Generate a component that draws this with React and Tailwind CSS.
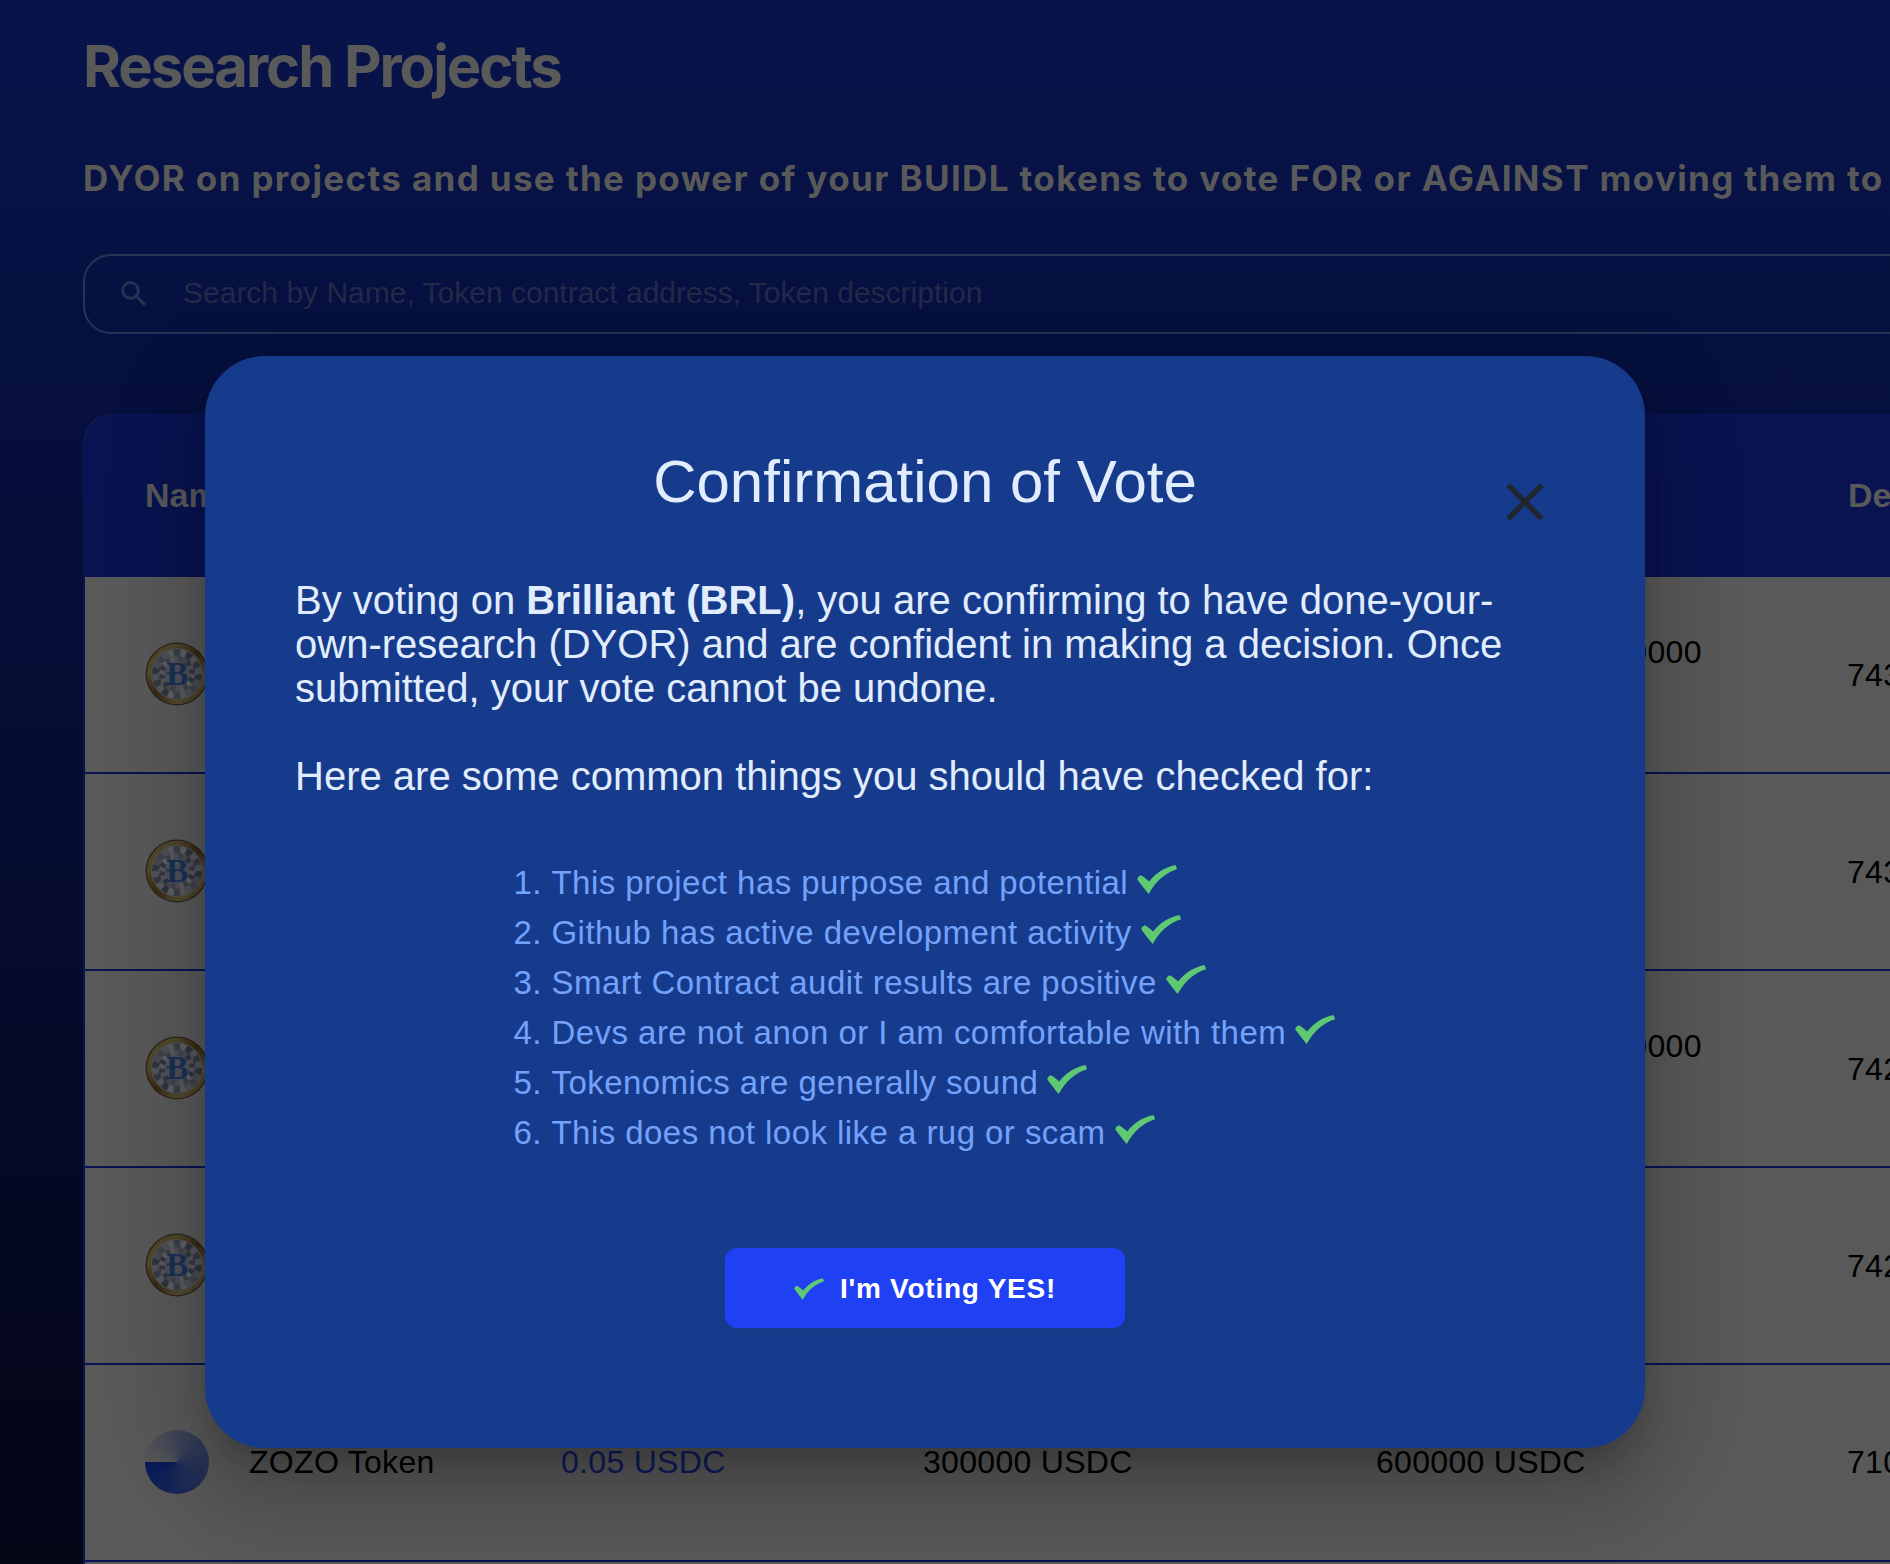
import { MdSearch, MdClose } from "react-icons/md";

function Check({ className }) {
  return (
    <svg viewBox="0 0 40 29" className={className} fill="#5fc872">
      <path d="M0.2 14.2 Q0.8 11.4 3.6 10.2 Q5 10.2 12.2 16.4 C18.5 8.6 27.5 2.2 38.4 0 Q39.6 2 40 4.3 C28.5 8 19 15.5 11.7 29 Q7 23.5 0.2 14.2Z" />
    </svg>
  );
}

const facetTones = ["#3b3f47", "#55585d", "#30343e", "#4d5158", "#5e6066", "#343841", "#484b50", "#5a5c60", "#2f343e", "#515459", "#3f434b"];

function Coin() {
  return (
    <svg viewBox="0 0 64 64" className="size-16 shrink-0">
      <defs>
        <linearGradient id="gold" x1="0" y1="0" x2="1" y2="1">
          <stop offset="0" stopColor="#4f472d" />
          <stop offset="0.25" stopColor="#50482c" />
          <stop offset="0.5" stopColor="#382813" />
          <stop offset="0.75" stopColor="#544b33" />
          <stop offset="1" stopColor="#3a2d15" />
        </linearGradient>
      </defs>
      <circle cx="32" cy="32" r="31.5" fill="#2a2518" />
      <circle cx="32" cy="32" r="30.2" fill="url(#gold)" />
      <circle cx="32" cy="32" r="26" fill="#55524a" />
      <circle cx="32" cy="32" r="25" fill="#464950" />
      {Array.from({ length: 22 }, (_, i) => (
        <g key={i} transform={`rotate(${i * 16.36} 32 32)`}>
          <path d="M28.5 7.3 L35.5 7.3 L33.5 15 L30 13Z" fill={facetTones[(i * 4) % 11]} />
          <path d="M30 13 L34.2 15.5 L32.5 22 L29.5 19Z" fill={facetTones[(i * 7 + 3) % 11]} />
        </g>
      ))}
      <circle cx="32" cy="32" r="12.5" fill="#4d5157" />
      <text x="32.5" y="42.5" textAnchor="middle" fontFamily="Liberation Serif, serif" fontWeight="700" fontSize="33" fill="#1a3057">B</text>
      <path d="M21.5 31.5H31" stroke="#1a3057" strokeWidth="1.8" />
    </svg>
  );
}

function Pie() {
  return <div className="size-16 shrink-0 rounded-full bg-[conic-gradient(from_270deg,#575757,#2b3757_45%,#1c2a56_70%,#0a1a58)]" />;
}

const rows = [
  { name: "Brilliant", price: "0.05 USDC", soft: "300000 USDC", hard: ["600000000000000000", "USDC"], left: "743 hours" },
  { name: "Brilliant", price: "0.05 USDC", soft: "300000 USDC", hard: ["600000 USDC"], left: "743 hours" },
  { name: "Brilliant", price: "0.05 USDC", soft: "300000 USDC", hard: ["600000000000000000", "USDC"], left: "742 hours" },
  { name: "Brilliant", price: "0.05 USDC", soft: "300000 USDC", hard: ["600000 USDC"], left: "742 hours" },
  { name: "ZOZO Token", price: "0.05 USDC", soft: "300000 USDC", hard: ["600000 USDC"], left: "710 hours", pie: true },
  { name: "", price: "", soft: "", hard: [""], left: "", blank: true },
];

const checks = [
  "This project has purpose and potential",
  "Github has active development activity",
  "Smart Contract audit results are positive",
  "Devs are not anon or I am comfortable with them",
  "Tokenomics are generally sound",
  "This does not look like a rug or scam",
];

const cols = "grid grid-cols-[416px_362px_453px_471px_400px] items-center pl-[60px] whitespace-nowrap";

function Dialog() {
  return (
    <div className="absolute left-[205px] top-[356px] flex h-[1092px] w-[1440px] flex-col items-center rounded-[60px] bg-[#173b8c] text-[#e1edfd] shadow-[0_22px_30px_-14px_rgba(0,0,0,0.2),0_48px_76px_6px_rgba(0,0,0,0.14),0_18px_92px_16px_rgba(0,0,0,0.12)]">
      <h2 className="mt-[90px] text-[60px] leading-[72px]">Confirmation of Vote</h2>
      <button className="absolute left-[1288px] top-[114px]">
        <MdClose className="size-[64px] text-[#20262f]" />
      </button>
      <div className="mt-[60px] w-[1260px] text-[40px] leading-[44px] whitespace-nowrap">
        <p>
          By voting on <b>Brilliant (BRL)</b>, you are confirming to have done-your-
          <br />
          own-research (DYOR) and are confident in making a decision. Once
          <br />
          submitted, your vote cannot be undone.
        </p>
        <p className="mt-11">Here are some common things you should have checked for:</p>
      </div>
      <ol className="mt-[60px] w-[823px] text-[33px] leading-[50px] tracking-[0.45px] text-[#73a2fb]">
        {checks.map((t, i) => (
          <li key={t} className="flex h-[50px] items-center whitespace-nowrap">
            <span className="w-[38px]">{i + 1}.</span>
            {t}
            <Check className="relative -top-1 ml-[9px] h-[29px] w-10" />
          </li>
        ))}
      </ol>
      <button className="mt-[90px] flex h-20 w-[400px] items-center justify-center rounded-xl bg-[#1f40f3] pt-px text-[28px] font-bold tracking-[0.75px] text-white shadow-[0_2px_4px_rgba(0,0,0,0.06)]">
        <Check className="mr-4 h-[22px] w-[30px]" />
        I'm Voting YES!
      </button>
    </div>
  );
}

export default function App() {
  return (
    <div className="relative h-[1564px] w-[1890px] overflow-hidden bg-linear-to-b from-[#08134b] via-[#050d32] to-[#040616] pl-[83px] font-['Liberation_Sans',Arial,sans-serif]">
      <h1 className="pt-[30px] font-[Inter,sans-serif] text-[58px] font-bold leading-[72px] tracking-[-2.05px] text-[#595959]">Research Projects</h1>
      <p className="mt-[54px] font-[Inter,sans-serif] text-[35px] font-bold leading-[44px] tracking-[1.35px] whitespace-nowrap text-[#595959]">
        DYOR on projects and use the power of your BUIDL tokens to vote FOR or AGAINST moving them to
      </p>
      <div className="mt-[54px] flex h-20 w-[2000px] items-center rounded-[28px] border-2 border-[#263453] pl-[32px] text-[#263453]">
        <MdSearch className="size-[34px]" />
        <span className="ml-[32px] pb-[3px] text-[30px] text-[#222b47]">Search by Name, Token contract address, Token description</span>
      </div>
      <div className="mt-20 w-[2000px] overflow-hidden rounded-t-[28px] border-l-2 border-[#091351] bg-[#595959]">
        <div className={`${cols} h-[163px] bg-[#091351] text-[34px] font-bold text-[#595959]`}>
          <span>Name</span>
          <span>Price</span>
          <span>Soft Cap</span>
          <span>Hard Cap</span>
          <span className="ml-px">Deadline</span>
        </div>
        {rows.map((r, i) => (
          <div key={i} className={`${cols} ${r.pie ? "pb-[2px]" : ""} h-[197px] border-b-2 border-[#091351] text-[32px] leading-[46px] tracking-[0.3px] text-black`}>
            <span className={`flex items-center gap-10 ${r.pie ? "" : "pb-[2px]"}`}>
              {!r.blank && (r.pie ? <Pie /> : <Coin />)}
              {r.name}
            </span>
            <span className="text-[#0f1c5c]">{r.price}</span>
            <span>{r.soft}</span>
            <span>{r.hard.map((h) => <div key={h}>{h}</div>)}</span>
            <span>{r.left}</span>
          </div>
        ))}
      </div>
      <Dialog />
    </div>
  );
}
